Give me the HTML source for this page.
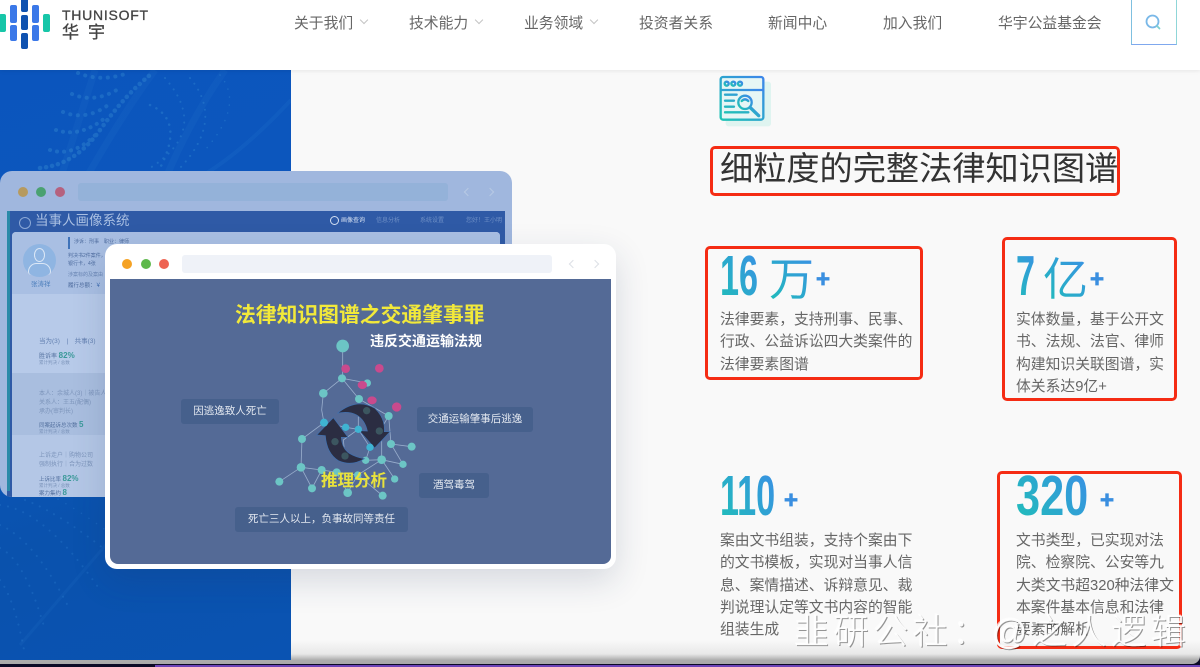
<!DOCTYPE html>
<html lang="zh"><head><meta charset="utf-8"><title>细粒度的完整法律知识图谱</title>
<style>
*{margin:0;padding:0;box-sizing:border-box}
html,body{width:1200px;height:667px;overflow:hidden;background:#0b0a25}
body{position:relative;font-family:"Liberation Sans","Noto Sans CJK SC",sans-serif}
.abs,.abs *{position:absolute}
#page{position:absolute;left:0;top:0;width:1200px;height:664px;background:linear-gradient(#f9f9f9 0,#f9f9f9 640px,#e8e8e8 654px,#adadad 660px,#a9a9a9 664px);border-bottom-right-radius:8px;overflow:hidden;filter:blur(.35px)}
#hdr{position:absolute;left:0;top:0;width:1200px;height:70px;background:#fff;box-shadow:0 1px 4px rgba(0,0,0,.08);z-index:5;filter:blur(.35px)}
.nav{position:absolute;top:13px;font-size:14.8px;line-height:22px;color:#666;white-space:nowrap}
.chev{position:absolute;top:17px;width:6px;height:6px;border-right:1.3px solid #c4c4c4;border-bottom:1.3px solid #c4c4c4;transform:rotate(45deg)}
.bar{position:absolute;width:7px;border-radius:2px}
#blue{position:absolute;left:0;top:70px;width:291px;height:590px;background:linear-gradient(160deg,#0b55bd 0,#0c57bd 40%,#0a52ad 70%,#0a53b2 100%)}
.win{position:absolute;border-radius:12px}
.tag{position:absolute;height:25px;line-height:25px;border-radius:3px;background:#46608c;color:#e3e8f0;font-size:10.5px;text-align:center;white-space:nowrap}
.box{position:absolute;border:3px solid #f52c14;border-radius:5px}
.num{position:absolute;font-size:57px;line-height:60px;font-weight:700;white-space:nowrap;transform-origin:0 0;background:linear-gradient(45deg,#1fbfb8,#3a8ee6);-webkit-background-clip:text;background-clip:text;color:transparent}
.unit{position:absolute;font-size:45px;line-height:50px;white-space:nowrap;background:linear-gradient(45deg,#1fbfb8,#3a8ee6);-webkit-background-clip:text;background-clip:text;color:transparent}
.plus{position:absolute;font-size:24px;line-height:24px;font-weight:700;color:#3a8fe0;-webkit-text-stroke:.8px #3a8fe0}
.desc{position:absolute;font-size:14.8px;line-height:22.3px;color:#666;white-space:nowrap}
</style></head><body>
<div id="page">

<div id="blue">
<svg width="291" height="590" style="position:absolute;left:0;top:0">
<g fill="none" stroke="#2a7dcc" stroke-linecap="round" opacity=".55">
<path d="M78 3Q100 12 125 4" stroke-width="4" stroke-dasharray=".1 7.5"/>
<path d="M72 24Q95 34 120 18" stroke-width="4" stroke-dasharray=".1 7.5"/>
<path d="M63 42Q88 52 112 32" stroke-width="4" stroke-dasharray=".1 7.5"/>
<path d="M56 60Q80 68 105 48" stroke-width="4" stroke-dasharray=".1 7"/>
<path d="M50 80Q75 88 100 60" stroke-width="4" stroke-dasharray=".1 7"/>
<path d="M40 98Q75 95 100 60T150 5" stroke-width="4.5" stroke-dasharray=".1 6"/>
<path d="M150 35Q185 50 160 98" stroke-width="2.5" stroke-dasharray=".1 7"/>
<path d="M165 8Q210 60 150 98" stroke-width="2" stroke-dasharray=".1 7"/>
<path d="M190 8Q225 50 180 98" stroke-width="2" stroke-dasharray=".1 7"/>
<path d="M220 5Q245 35 205 80" stroke-width="1.5" stroke-dasharray=".1 8"/>
</g>
<path d="M60 110L95 0M155 0Q125 40 85 110M225 0Q190 50 165 110" stroke="#3b8ad8" stroke-width="7" fill="none" opacity=".1"/>
<path d="M195 110Q240 85 291 30" stroke="#3b8ad8" stroke-width="4" fill="none" opacity=".12"/>
<g fill="none" stroke="#2f7fd0" stroke-linecap="round" opacity=".32">
<path d="M0 435Q45 440 100 520" stroke-width="2" stroke-dasharray=".1 8"/>
<path d="M0 455Q35 470 70 540" stroke-width="2" stroke-dasharray=".1 8"/>
<path d="M0 478Q25 490 45 560" stroke-width="2" stroke-dasharray=".1 8"/>
<path d="M25 430Q65 445 130 500" stroke-width="2" stroke-dasharray=".1 8"/>
<path d="M50 425Q90 445 150 495" stroke-width="1.5" stroke-dasharray=".1 9"/>
<path d="M0 510Q15 530 25 585" stroke-width="2" stroke-dasharray=".1 8"/>
</g>
<path d="M20 575L110 470" stroke="#3b8ad8" stroke-width="3" opacity=".1"/>
</svg>
</div>

<!-- back window -->
<div class="win" style="left:0;top:171px;width:512px;height:326px;background:#a0b7de;overflow:hidden">
<div class="abs" style="left:0;top:0;width:512px;height:326px">
<div style="left:18px;top:16px;width:10px;height:10px;border-radius:50%;background:#b69a5f"></div>
<div style="left:36px;top:16px;width:10px;height:10px;border-radius:50%;background:#4aa171"></div>
<div style="left:55px;top:16px;width:10px;height:10px;border-radius:50%;background:#b5627f"></div>
<div style="left:78px;top:12px;width:370px;height:18px;border-radius:3px;background:#94b2d9"></div>
<div style="left:465px;top:18px;width:6px;height:6px;border-left:1px solid #b7c9e3;border-bottom:1px solid #b7c9e3;transform:rotate(45deg)"></div>
<div style="left:487px;top:18px;width:6px;height:6px;border-right:1px solid #b7c9e3;border-top:1px solid #b7c9e3;transform:rotate(45deg)"></div>
<div style="left:7px;top:40px;width:498px;height:286px;background:#2f5aa6"></div>
<div style="left:7px;top:40px;width:3px;height:280px;background:#2a8aa8"></div>
<div style="left:35px;top:40px;font-size:13.5px;line-height:20px;color:#a9bfe2;white-space:nowrap">当事人画像系统</div>
<div style="left:19px;top:46px;width:12px;height:12px;border-radius:50%;border:1px solid #8ba8d6"></div>
<div style="left:330px;top:45px;width:9px;height:9px;border-radius:50%;border:1px solid #d4e0f2"></div>
<div style="left:341px;top:46px;font-size:6px;line-height:8px;color:#d4e0f2;white-space:nowrap">画像查询</div>
<div style="left:376px;top:46px;font-size:6px;line-height:8px;color:#6f90c6;white-space:nowrap">信息分析</div>
<div style="left:420px;top:46px;font-size:6px;line-height:8px;color:#6f90c6;white-space:nowrap">系统设置</div>
<div style="left:466px;top:46px;font-size:6px;line-height:8px;color:#6f90c6;white-space:nowrap">您好！王小明</div>
<div style="left:12px;top:61px;width:488px;height:265px;border-radius:4px 4px 0 0;background:linear-gradient(90deg,#b8cbe9 0,#c4d4ec 40%,#c8d7ee 100%)"></div>
<div style="left:12px;top:61px;width:488px;height:62px;border-radius:4px 4px 0 0;background:#a9bfe3"></div>
<div style="left:23px;top:73px;width:33px;height:33px;border-radius:50%;background:#8fb5e2"></div>
<div style="left:34px;top:77px;width:11px;height:14px;border-radius:50%;border:1px solid #dbe7f6"></div>
<div style="left:28px;top:92px;width:23px;height:12px;border-radius:10px 10px 4px 4px;border:1px solid #dbe7f6;border-bottom:0"></div>
<div style="left:31px;top:110px;font-size:6.5px;line-height:8px;color:#4f80bd;white-space:nowrap">张涛祥</div>
<div style="left:68px;top:66px;width:2px;height:12px;background:#3f73b9"></div>
<div style="left:74px;top:68px;font-size:5px;line-height:7px;color:#4f6d9f;white-space:nowrap">涉诉：刑事　职业：律师</div>
<div style="left:68px;top:81px;font-size:5px;line-height:8px;color:#4f6d9f;white-space:nowrap">判决书2件案件，<br>银行卡，4张</div>
<div style="left:68px;top:101px;font-size:5px;line-height:7px;color:#6a86b4;white-space:nowrap">涉案标的及案由</div>
<div style="left:68px;top:111px;font-size:5.5px;line-height:8px;color:#4f6d9f;white-space:nowrap">履行总额：<span style="position:static;color:#3767ad">￥</span></div>
<div style="left:37px;top:130px;width:23px;height:8px;background:#3f73bd;border-radius:1px;font-size:5px;line-height:8px;color:#d7e4f5;text-align:center">法院</div>
<div style="left:64px;top:130px;width:31px;height:8px;background:#c0d0ea;border-radius:1px;font-size:5px;line-height:8px;color:#6a86b4;text-align:center">律师事务</div>
<div style="left:12px;top:123px;width:110px;height:79px;background:#b7cae9"></div>
<div style="left:12px;top:202px;width:110px;height:62px;background:#a9bedf"></div>
<div style="left:12px;top:264px;width:110px;height:62px;background:#b4c7e6"></div>
<div style="left:39px;top:167px;font-size:6.5px;line-height:8px;color:#6380b1;white-space:nowrap">当为(3)　|　共事(3)</div>
<div style="left:39px;top:181px;font-size:6px;line-height:8px;color:#54719f;white-space:nowrap">胜诉率 <span style="position:static;font-size:8px;color:#3b9999;font-weight:700">82%</span></div>
<div style="left:39px;top:189px;font-size:4.5px;line-height:6px;color:#7d95bb;white-space:nowrap">累计判决 / 总数</div>
<div style="left:39px;top:219px;font-size:6px;line-height:9px;color:#7d95bb;white-space:nowrap">本人：余城人(3)｜被告人<br>关系人：王五(配偶)<br>承办(审判长)</div>
<div style="left:39px;top:250px;font-size:5.5px;line-height:8px;color:#54719f;white-space:nowrap">同案起诉总次数 <span style="position:static;font-size:8px;color:#3b9999;font-weight:700">5</span></div>
<div style="left:39px;top:258px;font-size:4.5px;line-height:6px;color:#7d95bb;white-space:nowrap">累计判决 / 总数</div>
<div style="left:39px;top:281px;font-size:6px;line-height:9px;color:#7d95bb;white-space:nowrap">上诉走户｜购物公司<br>强制执行｜合为过数</div>
<div style="left:39px;top:304px;font-size:5.5px;line-height:8px;color:#54719f;white-space:nowrap">上诉比率 <span style="position:static;font-size:8px;color:#3b9999;font-weight:700">82%</span></div>
<div style="left:39px;top:312px;font-size:4.5px;line-height:6px;color:#7d95bb;white-space:nowrap">累计判决 / 总数</div>
<div style="left:39px;top:318px;font-size:5.5px;line-height:8px;color:#54719f;white-space:nowrap">案力集约 <span style="position:static;font-size:8px;color:#3b9999;font-weight:700">8</span></div>
</div>
</div>

<!-- front window -->
<div class="win" style="left:105px;top:244px;width:511px;height:325px;background:#fff;box-shadow:0 12px 34px rgba(30,50,90,.16)"></div>
<div style="position:absolute;left:122px;top:259px;width:10px;height:10px;border-radius:50%;background:#f5a224"></div>
<div style="position:absolute;left:141px;top:259px;width:10px;height:10px;border-radius:50%;background:#5db84a"></div>
<div style="position:absolute;left:159px;top:259px;width:10px;height:10px;border-radius:50%;background:#ee6352"></div>
<div style="position:absolute;left:182px;top:255px;width:370px;height:18px;border-radius:3px;background:#eff2f8"></div>
<div style="position:absolute;left:570px;top:261px;width:6px;height:6px;border-left:1px solid #dde0e6;border-bottom:1px solid #dde0e6;transform:rotate(45deg)"></div>
<div style="position:absolute;left:592px;top:261px;width:6px;height:6px;border-right:1px solid #dde0e6;border-top:1px solid #dde0e6;transform:rotate(45deg)"></div>
<div style="position:absolute;left:110px;top:279px;width:501px;height:285px;border-radius:0 0 8px 8px;background:#546a96"></div>

<div class="tag" style="left:181px;top:399px;width:98px">因逃逸致人死亡</div>
<div class="tag" style="left:417px;top:407px;width:116px">交通运输肇事后逃逸</div>
<div class="tag" style="left:419px;top:473px;width:70px">酒驾毒驾</div>
<div class="tag" style="left:235px;top:507px;width:173px">死亡三人以上，负事故同等责任</div>

<svg style="position:absolute;left:100px;top:240px" width="520" height="340" viewBox="0 0 1560 1020">
<g fill="none" stroke="#98adcc" stroke-width="2.5">
<path d="M728 318V415M726 415L802 429M726 415L670 460M726 415L777 477M670 460L665 510 672 548 606 597 603 682 538 725M603 682L665 690M603 682L636 745 665 690 710 697 773 705 743 758 710 697M777 477L866 528 873 612 935 620M873 612L909 673 845 659 797 661 810 622 775 568 737 562 672 548M866 528L838 575 810 622M845 659L884 717M845 659L773 705 848 767M845 600V659M775 530V568L730 600 735 650"/>
</g>
<g fill="#6cc5c5">
<circle cx="728" cy="318" r="19"/><circle cx="726" cy="415" r="12"/><circle cx="802" cy="429" r="11"/><circle cx="670" cy="460" r="13"/><circle cx="777" cy="477" r="12"/><circle cx="866" cy="528" r="12"/><circle cx="606" cy="597" r="12"/><circle cx="873" cy="612" r="12"/><circle cx="935" cy="620" r="12"/><circle cx="797" cy="661" r="11"/><circle cx="845" cy="659" r="13"/><circle cx="909" cy="673" r="11"/><circle cx="603" cy="682" r="13"/><circle cx="665" cy="690" r="12"/><circle cx="710" cy="697" r="12"/><circle cx="773" cy="705" r="11"/><circle cx="884" cy="717" r="11"/><circle cx="538" cy="725" r="12"/><circle cx="636" cy="745" r="12"/><circle cx="743" cy="758" r="13"/><circle cx="848" cy="767" r="12"/>
</g>
<g fill="#c94a8d">
<circle cx="737" cy="386" r="13"/><circle cx="838" cy="385" r="13"/><ellipse cx="787" cy="435" rx="14" ry="12"/><ellipse cx="816" cy="481" rx="14" ry="12"/><circle cx="890" cy="501" r="14"/>
</g>
<g fill="#2b2d42" stroke="#3f6fae" stroke-width="2">
<path d="M712 520Q770 472 825 505 856 535 853 575L870 575 824 624 778 572 802 573Q795 540 770 525 745 512 712 520Z"/>
<path d="M650 585L700 533 744 592 724 592Q726 625 748 640 768 652 793 656 755 680 715 662 680 640 676 587Z"/>
</g>
<g fill="#3fb4d2">
<circle cx="672" cy="548" r="12"/><circle cx="737" cy="562" r="11"/><circle cx="775" cy="568" r="11"/><circle cx="810" cy="622" r="11"/>
</g>
<g fill="#3c5660"><circle cx="705" cy="605" r="11"/><circle cx="735" cy="648" r="11"/><circle cx="838" cy="573" r="11"/><circle cx="800" cy="512" r="11"/></g>
</svg>

<div style="position:absolute;left:235px;top:302px;width:260px;font-size:20.8px;line-height:27px;font-weight:700;color:#f2e93a;white-space:nowrap">法律知识图谱之交通肇事罪</div>
<div style="position:absolute;left:370px;top:331px;font-size:14px;line-height:20px;font-weight:700;color:#fff;white-space:nowrap">违反交通运输法规</div>
<div style="position:absolute;left:321px;top:470px;font-size:16.5px;line-height:22px;font-weight:700;color:#e8e23c;white-space:nowrap">推理分析</div>

<!-- right -->
<svg style="position:absolute;left:710px;top:70px" width="70" height="60" viewBox="0 0 210 180">
<defs><linearGradient id="g1" x1="0" y1="1" x2="1" y2="0"><stop offset="0" stop-color="#1fc4b4"/><stop offset="1" stop-color="#3d86ea"/></linearGradient></defs>
<rect x="47" y="35" width="136" height="134" rx="8" fill="#dff4f0"/>
<rect x="32" y="21" width="128" height="128" rx="7" fill="#e6f6f5"/>
<g fill="none" stroke="url(#g1)" stroke-width="7" stroke-linecap="round">
<rect x="32" y="21" width="128" height="128" rx="7"/>
<path d="M32 60H160M45 74H80M45 92H72M45 110H72M45 127H115"/>
<circle cx="50" cy="41" r="6"/><circle cx="70" cy="41" r="6"/><circle cx="90" cy="41" r="6"/>
<circle cx="105" cy="97" r="20"/><path d="M95 93Q105 83 115 93"/>
<path d="M122 114L146 137" stroke-width="10"/>
</g>
</svg>

<div style="position:absolute;left:720px;top:147px;font-size:33.2px;line-height:46px;color:#333;white-space:nowrap">细粒度的完整法律知识图谱</div>
<div class="box" style="left:710px;top:146px;width:410px;height:50px"></div>

<div class="num" style="left:720px;top:246px;transform:scaleX(.6)">16</div>
<div class="unit" style="left:769px;top:255px">万</div>
<div class="plus" style="left:816px;top:268px">+</div>
<div class="desc" style="left:720px;top:309px">法律要素，支持刑事、民事、<br>行政、公益诉讼四大类案件的<br>法律要素图谱</div>
<div class="box" style="left:705px;top:246px;width:218px;height:134px"></div>

<div class="num" style="left:1016px;top:246px;transform:scaleX(.6)">7</div>
<div class="unit" style="left:1043px;top:255px">亿</div>
<div class="plus" style="left:1090px;top:268px">+</div>
<div class="desc" style="left:1016px;top:309px">实体数量，基于公开文<br>书、法规、法官、律师<br>构建知识关联图谱，实<br>体关系达9亿+</div>
<div class="box" style="left:1002px;top:237px;width:175px;height:164px"></div>

<div class="num" style="left:720px;top:466px;transform:scaleX(.6)">110</div>
<div class="plus" style="left:784px;top:489px">+</div>
<div class="desc" style="left:720px;top:530px">案由文书组装，支持个案由下<br>的文书模板，实现对当事人信<br>息、案情描述、诉辩意见、裁<br>判说理认定等文书内容的智能<br>组装生成</div>

<div class="num" style="left:1016px;top:466px;transform:scaleX(.76)">320</div>
<div class="plus" style="left:1100px;top:489px">+</div>
<div class="desc" style="left:1016px;top:530px">文书类型，已实现对法<br>院、检察院、公安等九<br>大类文书超320种法律文<br>本案件基本信息和法律<br>要素的解析</div>
<div class="box" style="left:997px;top:471px;width:185px;height:178px"></div>

<div style="position:absolute;left:794px;top:609px;font-size:35px;line-height:48px;letter-spacing:4.6px;color:rgba(255,255,255,.96);text-shadow:1px 1px 0 rgba(0,0,0,.4),-1px -1px 0 rgba(255,255,255,.7);font-weight:300;white-space:nowrap">韭研公社：@之人逻辑</div>

</div>

<div style="position:absolute;left:155px;top:665px;width:1045px;height:2px;background:#6d44b8"></div>

<!-- header -->
<div id="hdr">
<div class="bar" style="left:-1px;top:14px;height:18px;background:#17c6a8"></div>
<div class="bar" style="left:10px;top:5px;height:18px;background:#3b78e8"></div>
<div class="bar" style="left:10px;top:25px;height:16px;background:#3b78e8"></div>
<div class="bar" style="left:21px;top:-3px;height:15px;background:#0f52b0"></div>
<div class="bar" style="left:21px;top:15px;height:15px;background:#0f52b0"></div>
<div class="bar" style="left:21px;top:33px;height:16px;background:#0f52b0"></div>
<div class="bar" style="left:32px;top:5px;height:18px;background:#3b78e8"></div>
<div class="bar" style="left:32px;top:25px;height:16px;background:#3b78e8"></div>
<div class="bar" style="left:43px;top:14px;height:18px;background:#17c6a8"></div>
<div style="position:absolute;left:62px;top:8px;font-size:14px;line-height:15px;letter-spacing:.75px;color:#444;-webkit-text-stroke:.3px #444;white-space:nowrap">THUNISOFT</div>
<div style="position:absolute;left:62px;top:23px;font-size:17px;line-height:20px;letter-spacing:9px;color:#444;-webkit-text-stroke:.3px #444;white-space:nowrap">华宇</div>

<div class="nav" style="left:294px">关于我们</div><div class="chev" style="left:361px"></div>
<div class="nav" style="left:409px">技术能力</div><div class="chev" style="left:476px"></div>
<div class="nav" style="left:524px">业务领域</div><div class="chev" style="left:591px"></div>
<div class="nav" style="left:639px">投资者关系</div>
<div class="nav" style="left:768px">新闻中心</div>
<div class="nav" style="left:883px">加入我们</div>
<div class="nav" style="left:998px">华宇公益基金会</div>

<div style="position:absolute;left:1131px;top:-2px;width:46px;height:47px;border:1.5px solid #7fc0e0;border-bottom-color:#7fa8ee;border-right-color:#8fd6d8"></div>
<svg style="position:absolute;left:1143px;top:12px" width="20" height="20" viewBox="0 0 20 20" fill="none" stroke-width="1.8" stroke-linecap="round"><circle cx="9.5" cy="9.5" r="6" stroke="#79b8e8"/><path d="M14 14L16.5 16.5" stroke="#7fd0d0"/></svg>
</div>
</body></html>
